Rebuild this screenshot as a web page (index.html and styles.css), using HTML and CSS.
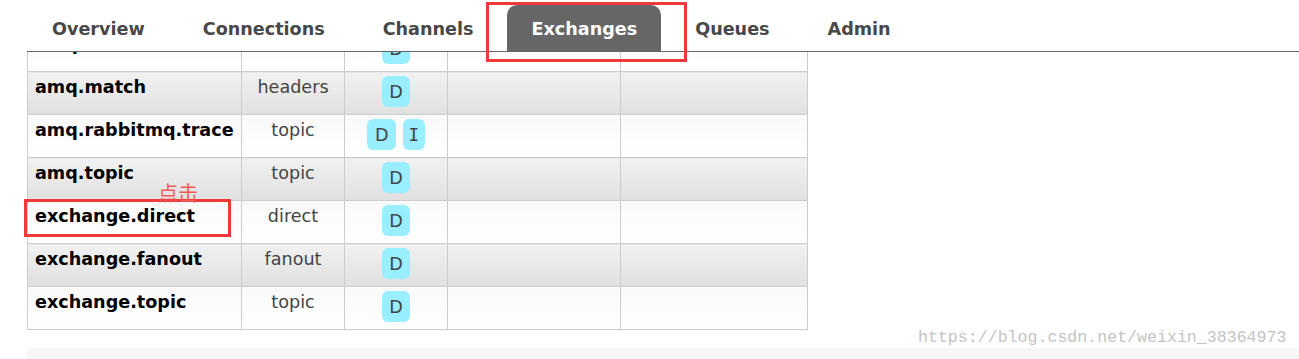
FILE: index.html
```html
<!DOCTYPE html>
<html lang="en">
<head>
    <meta charset="UTF-8">
    <meta name="viewport" content="width=device-width, initial-scale=1.0">
    <title>RabbitMQ Management - Exchanges</title>
    <link rel="stylesheet" href="styles.css">
</head>
<body>
    <header class="top">
        <ul class="tabs">
            <li>Overview</li>
            <li>Connections</li>
            <li>Channels</li>
            <li class="selected">Exchanges</li>
            <li>Queues</li>
            <li>Admin</li>
        </ul>
    </header>

    <div class="main">
        <table class="list">
            <tr class="alt2">
                <td class="name">amq.headers</td>
                <td class="type">headers</td>
                <td class="features"><div class="flags"><span class="flag">D</span></div></td>
                <td class="rate-in"></td>
                <td class="rate-out"></td>
            </tr>
            <tr class="alt1">
                <td class="name">amq.match</td>
                <td class="type">headers</td>
                <td class="features"><div class="flags"><span class="flag">D</span></div></td>
                <td class="rate-in"></td>
                <td class="rate-out"></td>
            </tr>
            <tr class="alt2">
                <td class="name">amq.rabbitmq.trace</td>
                <td class="type">topic</td>
                <td class="features"><div class="flags"><span class="flag">D</span><span class="flag flag-i">I</span></div></td>
                <td class="rate-in"></td>
                <td class="rate-out"></td>
            </tr>
            <tr class="alt1">
                <td class="name">amq.topic</td>
                <td class="type">topic</td>
                <td class="features"><div class="flags"><span class="flag">D</span></div></td>
                <td class="rate-in"></td>
                <td class="rate-out"></td>
            </tr>
            <tr class="alt2">
                <td class="name">exchange.direct</td>
                <td class="type">direct</td>
                <td class="features"><div class="flags"><span class="flag">D</span></div></td>
                <td class="rate-in"></td>
                <td class="rate-out"></td>
            </tr>
            <tr class="alt1">
                <td class="name">exchange.fanout</td>
                <td class="type">fanout</td>
                <td class="features"><div class="flags"><span class="flag">D</span></div></td>
                <td class="rate-in"></td>
                <td class="rate-out"></td>
            </tr>
            <tr class="alt2">
                <td class="name">exchange.topic</td>
                <td class="type">topic</td>
                <td class="features"><div class="flags"><span class="flag">D</span></div></td>
                <td class="rate-in"></td>
                <td class="rate-out"></td>
            </tr>
        </table>

        <div class="section"></div>
    </div>

    <!-- annotations drawn on top of the screenshot -->
    <div class="mark mark-tab"></div>
    <div class="mark mark-row"></div>
    <div class="note">点击</div>
    <div class="watermark">https://blog.csdn.net/weixin_38364973</div>
</body>
</html>
```

FILE: styles.css
```css
html, body {
    margin: 0;
    padding: 0;
    background-color: #fff;
    font-family: "DejaVu Sans", Verdana, sans-serif;
    font-size: 17.6px;
    overflow: hidden;
}

.top {
    position: fixed;
    top: 0;
    left: 0;
    right: 0;
    height: 52px;
    background-color: #fff;
    z-index: 2;
}

.tabs {
    list-style: none;
    margin: 0 0 0 27px;
    padding: 5px 0 0 1px;
    height: 46px;
    display: flex;
    gap: 10px;
    border-bottom: 1px solid #666;
}

.tabs li {
    padding: 3px 24px 0 24px;
    height: 46px;
    line-height: 42px;
    font-weight: bold;
    color: #484848;
    border-radius: 10px 10px 0 0;
    box-sizing: border-box;
}

.tabs li.selected {
    background-color: #666;
    color: #fff;
}

.main {
    padding: 28px 0 0 27px;
}

table.list {
    border-collapse: collapse;
    table-layout: fixed;
    width: 781px;
}

table.list td {
    border: 1px solid #ccc;
    padding: 5px 8px 0 8px;
    line-height: 20px;
    vertical-align: top;
    height: 43px;
    box-sizing: border-box;
}

table.list tr.alt1 td {
    background: linear-gradient(#f1f1f1, #e0e0e0);
}

table.list tr.alt2 td {
    background: linear-gradient(#f9f9f9, #fff);
}

table.list td.name {
    width: 214px;
    padding-left: 7px;
    font-weight: bold;
    color: #000;
    white-space: nowrap;
    overflow: hidden;
}

td.type {
    width: 103px;
    text-align: center;
    color: #444;
}

td.features {
    width: 103px;
}

td.rate-in {
    width: 173px;
}

td.rate-out {
    width: 187px;
}

table.list td.features {
    padding: 4px 0 0 0;
}

.flags {
    display: flex;
    justify-content: center;
    gap: 7px;
}

.flag {
    display: inline-block;
    height: 31px;
    line-height: 32px;
    padding: 0 7.5px;
    background-color: #99eeff;
    color: #444;
    border-radius: 6px;
}

.flag-i {
    font-family: "DejaVu Sans Mono", monospace;
    padding: 0 5.5px;
}

.section {
    margin-top: 18px;
    height: 40px;
    background-color: #f7f7f7;
}

/* red annotations */
.mark {
    position: absolute;
    border: 3px solid #f03a3a;
    box-sizing: border-box;
    z-index: 3;
}

.mark-tab {
    left: 486px;
    top: 2px;
    width: 201px;
    height: 60px;
}

.mark-row {
    left: 24px;
    top: 199px;
    width: 207px;
    height: 38px;
}

.note {
    position: absolute;
    left: 158px;
    top: 181px;
    font-family: "Noto Sans CJK SC", sans-serif;
    font-size: 20px;
    line-height: 24px;
    color: #f45c5c;
    z-index: 3;
}

.watermark {
    position: absolute;
    left: 918px;
    top: 328px;
    font-family: "Liberation Mono", monospace;
    font-size: 16.6px;
    line-height: 20px;
    color: #c4c4c4;
    z-index: 3;
}
```
